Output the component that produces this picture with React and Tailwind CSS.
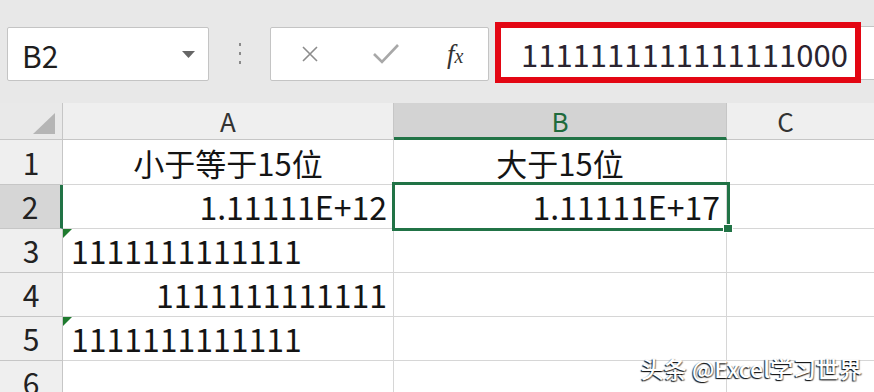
import React from "react";

const FONT = "font-['Noto_Sans_CJK_SC',sans-serif]";

const rows = [
  { n: "1", a: "小于等于15位", aAlign: "center", b: "大于15位", bAlign: "center", cjk: true },
  { n: "2", a: "1.11111E+12", aAlign: "right", b: "1.11111E+17", bAlign: "right", selected: true },
  { n: "3", a: "1111111111111", aAlign: "left", flag: true },
  { n: "4", a: "1111111111111", aAlign: "right" },
  { n: "5", a: "1111111111111", aAlign: "left", flag: true },
  { n: "6" },
];

const alignClass = {
  left: "justify-start pl-[8px]",
  right: "justify-end pr-[6px]",
  center: "justify-center",
};

const Flag = () => (
  <svg className="absolute left-0 top-0" width="9" height="9" viewBox="0 0 9 9">
    <polygon points="0,0 9,0 0,9" fill="#1e7a2e" />
  </svg>
);

const Cell = ({ text, align, flag, cjk }) => (
  <div
    className={`relative flex items-end border-r border-b border-[#d6d6d6] bg-white leading-none text-[#141414] pb-[6px] ${
      cjk ? "text-[31px]" : "text-[32px]"
    } ${alignClass[align || "left"]}`}
  >
    {flag && <Flag />}
    {text && <span className="whitespace-nowrap">{text}</span>}
  </div>
);

export default function App() {
  return (
    <div className={`relative w-[874px] h-[392px] overflow-hidden bg-white ${FONT}`}>
      {/* formula bar */}
      <div className="relative h-[103px] bg-[#e8e8e8] flex items-start pt-[27px] pl-[7px]">
        <div className="w-[202px] h-[54px] bg-white border border-[#c4c4c4] rounded-[2px] flex items-center pl-[14px] pr-[13px]">
          <span className="text-[30px] leading-none text-[#1e1e1e] pt-[2px]">B2</span>
          <svg className="ml-auto" width="13" height="7" viewBox="0 0 13 7">
            <polygon points="0,0 13,0 6.5,7" fill="#666" />
          </svg>
        </div>
        <div className="ml-[30px] mt-[16px] flex flex-col gap-[6px]">
          <span className="block w-[2px] h-[3px] bg-[#8a8a8a]" />
          <span className="block w-[2px] h-[3px] bg-[#8a8a8a]" />
          <span className="block w-[2px] h-[3px] bg-[#8a8a8a]" />
        </div>
        <div className="ml-[29px] w-[219px] h-[54px] bg-white border border-[#c4c4c4] rounded-[2px] flex items-center">
          <svg className="ml-[31px]" width="16" height="16" viewBox="0 0 16 16">
            <path d="M1 1 L15 15 M15 1 L1 15" stroke="#8c8c8c" strokeWidth="1.6" fill="none" />
          </svg>
          <svg className="ml-[55px]" width="26" height="20" viewBox="0 0 26 20">
            <path d="M1 10 L9 18 L25 1" stroke="#a8a8a8" strokeWidth="2.6" fill="none" />
          </svg>
          <span className="ml-[48px] font-['Liberation_Serif',serif] italic text-[#333] leading-none">
            <span className="text-[27px]">f</span>
            <span className="text-[20px]">x</span>
          </span>
        </div>
        <div className="ml-[6px] -mt-[1px] flex-1 h-[54px] bg-white border-y border-l border-[#c4c4c4]" />
        {/* red highlight */}
        <div className="absolute left-[495px] top-[22px] w-[366px] h-[61px] border-[6px] border-[#e30613] bg-white flex items-center pl-[20px]">
          <span className="text-[31px] leading-none text-[#2a2430] pt-[2px]">1111111111111111000</span>
        </div>
      </div>

      {/* grid */}
      <div className="relative grid grid-cols-[63px_331px_333px_1fr] grid-rows-[37px_45px_44px_44px_44px_44px_44px]">
        <div className="relative bg-[#e9e9e9] border-r border-b border-[#c6c6c6]">
          <svg className="absolute left-[33px] top-[10px]" width="22" height="21" viewBox="0 0 22 21">
            <polygon points="22,0 22,21 0,21" fill="#b5b5b5" />
          </svg>
        </div>
        <div className="bg-[#efefef] border-r border-b border-[#c6c6c6] flex items-end justify-center pb-[5px] text-[26px] leading-none text-[#333]">
          A
        </div>
        <div className="bg-[#d3d3d3] border-r border-b-[3px] border-r-[#c6c6c6] border-b-[#217346] flex items-end justify-center pb-[3px] text-[26px] leading-none text-[#1f6b3c]">
          B
        </div>
        <div className="bg-[#efefef] border-b border-[#c6c6c6] flex items-end justify-center pb-[5px] text-[26px] leading-none text-[#333] pr-[30px]">
          C
        </div>

        {rows.map((r) => (
          <React.Fragment key={r.n}>
            <div
              className={`flex items-end justify-center pb-[7px] text-[30px] leading-none text-[#222] border-b border-[#c6c6c6] ${
                r.selected
                  ? "bg-[#d6d6d6] border-r-[3px] border-r-[#217346]"
                  : "bg-[#efefef] border-r border-r-[#c6c6c6]"
              }`}
            >
              {r.n}
            </div>
            <Cell text={r.a} align={r.aAlign} flag={r.flag} cjk={r.cjk} />
            <Cell text={r.b} align={r.bAlign} cjk={r.cjk} />
            <div className="border-b border-[#d6d6d6] bg-white" />
          </React.Fragment>
        ))}

        {/* selection of B2 */}
        <div className="absolute left-[392px] top-[79px] w-[338px] h-[49px] border-[3px] border-[#217346] pointer-events-none" />
        <div className="absolute left-[723px] top-[121px] w-[10px] h-[9px] bg-[#217346] border border-white" />
      </div>

      {/* watermark */}
      <div className="absolute right-[12px] bottom-[12px] font-['Noto_Sans_CJK_SC',sans-serif] font-medium text-[23px] leading-none text-white [text-shadow:-1px_1px_1px_rgba(0,0,0,0.9),1px_1px_1px_rgba(0,0,0,0.5)]">
        头条 @Excel学习世界
      </div>
    </div>
  );
}
